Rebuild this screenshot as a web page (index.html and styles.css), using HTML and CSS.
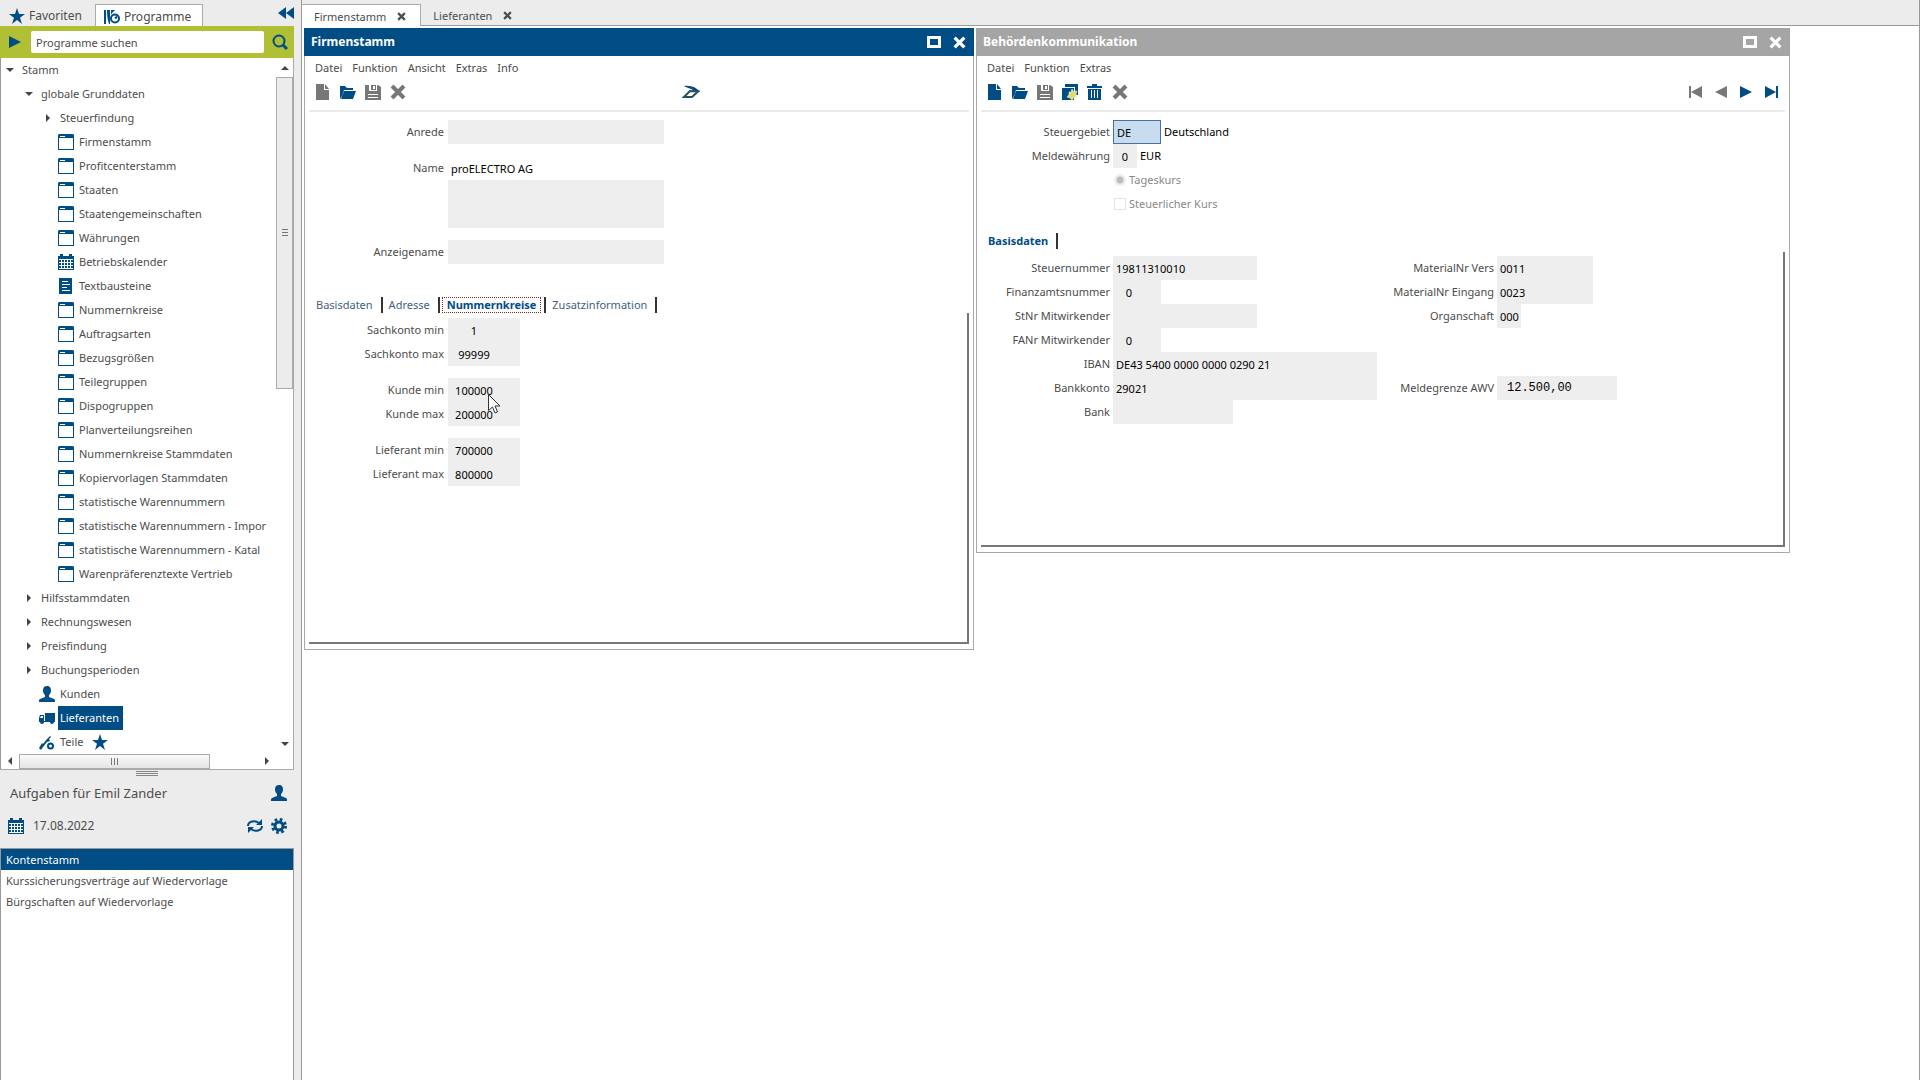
FILE: index.html
```html
<!DOCTYPE html>
<html lang="de">
<head>
<meta charset="utf-8">
<title>Firmenstamm</title>
<link rel="stylesheet" href="styles.css">
</head>
<body>
<svg class="sprite" aria-hidden="true">
  <symbol id="i-window" viewBox="0 0 16 16"><path fill="currentColor" d="M1 0h14l1 1v15H0V1zM1 4v11h14V4z"/><path stroke="#fff" d="M2 2.500h5"/></symbol>
  <symbol id="i-cal" viewBox="0 0 16 16"><path fill="currentColor" d="M0 2h2V0h3v2h6V0h3v2h2v14H0z"/><path stroke="#fff" fill="none" d="M1 5.500h14M1 8.500h14M1 11.500h14M1 14.500h14M3.500 6v9M6.500 6v9M9.500 6v9M12.500 6v9"/></symbol>
  <symbol id="i-text" viewBox="0 0 16 16"><path fill="currentColor" d="M1 0h13v16H1z"/><path stroke="#fff" d="M4 3.500h6M4 6.500h8M4 9.500h5M4 12.500h8"/></symbol>
  <symbol id="i-user" viewBox="0 0 16 16"><path fill="currentColor" d="M8 0c3 0 4 2 4 4.500C12 7 11 8 10 9v2l5 2c1 .5 1 1 1 3H0c0-2 0-2.500 1-3l5-2V9C5 8 4 7 4 4.500 4 2 5 0 8 0z"/></symbol>
  <symbol id="i-truck" viewBox="0 0 16 16"><path fill="currentColor" d="M6 3h10v8H6zM1 5h4v6h11v1h-1a2 2 0 0 1-4 0H5a2 2 0 0 1-4 0H0V8z"/><path fill="#fff" d="M2 6h2v2H1z"/></symbol>
  <symbol id="i-part" viewBox="0 0 16 16"><path fill="currentColor" d="M0 14l3-5 1 1 4-5 3-3 1 1-2 2 1 2-3 1-4 5-2 3z"/><circle cx="11.500" cy="12" r="2.500" fill="none" stroke="currentColor" stroke-width="2"/></symbol>
  <symbol id="i-star" viewBox="0 0 16 16"><path fill="currentColor" d="M8 0l2 6h6l-5 3.700L13 16l-5-4-5 4 2-6.300L0 6h6z"/></symbol>
  <symbol id="i-prog" viewBox="0 0 16 16"><path fill="currentColor" d="M0 1h2v14H0zM3 1h3v14H5C3.500 11 3 6 3 1zM7 1h4L8 4 7 6z"/><circle cx="11" cy="9.500" r="4" fill="none" stroke="currentColor" stroke-width="2"/><path stroke="currentColor" stroke-width="2" d="M11 9.500l2-2"/></symbol>
  <symbol id="i-back" viewBox="0 0 16 16"><path fill="currentColor" d="M8 2v12L0 8zM16 2v12L8 8z"/></symbol>
  <symbol id="i-play" viewBox="0 0 16 16"><path fill="currentColor" d="M2 2l12 6-12 6z"/></symbol>
  <symbol id="i-prev" viewBox="0 0 16 16"><path fill="currentColor" d="M14 2v12L2 8z"/></symbol>
  <symbol id="i-first" viewBox="0 0 16 16"><path fill="currentColor" d="M1 2h2v12H1zM14 2v12L3 8z"/></symbol>
  <symbol id="i-last" viewBox="0 0 16 16"><path fill="currentColor" d="M13 2h2v12h-2zM2 2v12l11-6z"/></symbol>
  <symbol id="i-search" viewBox="0 0 16 16"><circle cx="7" cy="7" r="5.500" fill="none" stroke="currentColor" stroke-width="2"/><path stroke="currentColor" stroke-width="3" d="M11 11l4 4"/></symbol>
  <symbol id="i-new" viewBox="0 0 16 16"><path fill="currentColor" d="M1 0h8v6h5v10H1zM10 0l4 5h-4z"/></symbol>
  <symbol id="i-open" viewBox="0 0 16 16"><path fill="currentColor" d="M0 2h5l2 2h6v2H4l-2 6-2 3zM4 7h12l-3 8H1z"/></symbol>
  <symbol id="i-save" viewBox="0 0 16 16"><path fill="currentColor" d="M0 1h4v6h8V1h1l3 2v13H0zM6 1h5v5H6z"/><path fill="#fff" d="M8 2h2v3H8z"/><path stroke="#fff" d="M3 10.500h10M3 13.500h10"/></symbol>
  <symbol id="i-x" viewBox="0 0 16 16"><path stroke="currentColor" stroke-width="4" d="M2 2l12 12M14 2L2 14"/></symbol>
  <symbol id="i-copy" viewBox="0 0 16 16"><path fill="currentColor" d="M3 0h13v11h-3V3H3zM0 4h12v12H0z"/><path fill="#e0dc6a" stroke="#fff" stroke-width=".5" d="M10 5l1.500 2.500L15 7l-1 3 1 3-3 .5-2 2.500-2-2-3-1 2-2.500L7 8l2 0z"/></symbol>
  <symbol id="i-trash" viewBox="0 0 16 16"><path fill="currentColor" d="M5 0h5v2h5v2H0V2h5zM1 5h13v11H1z"/><path stroke="#fff" d="M4.500 6v8M7.500 6v8M10.500 6v8"/></symbol>
  <symbol id="i-swift" viewBox="0 0 18 14"><path fill="#0b4a82" d="M2 1c7-1 12 1 16 6l-6-1C9 3 5 3 2 1z"/><path fill="none" stroke="#26505c" stroke-width="2" d="M2 12h8l6-5.500-8-.5z"/></symbol>
  <symbol id="i-max" viewBox="0 0 14 12"><path fill="none" stroke="currentColor" stroke-width="3" d="M1.500 1.500h11v9h-11z"/></symbol>
  <symbol id="i-sync" viewBox="0 0 16 16"><path fill="none" stroke="currentColor" stroke-width="2" d="M1 8c0-5 7-6 11-3M15 8c0 5-7 6-11 3"/><path fill="currentColor" d="M15 1v6H9zM1 15V9h6z"/></symbol>
  <symbol id="i-gear" viewBox="0 0 16 16"><circle cx="8" cy="8" r="4" fill="none" stroke="currentColor" stroke-width="3"/><circle cx="8" cy="8" r="6.500" fill="none" stroke="currentColor" stroke-width="3" stroke-dasharray="2.600 2.500"/></symbol>
  <symbol id="i-up" viewBox="0 0 8 8"><path fill="#444" d="M0 6l4-4 4 4z"/></symbol>
  <symbol id="i-down" viewBox="0 0 8 8"><path fill="#444" d="M0 2h8L4 6z"/></symbol>
  <symbol id="i-left" viewBox="0 0 8 8"><path fill="#444" d="M6 0v8L2 4z"/></symbol>
  <symbol id="i-right" viewBox="0 0 8 8"><path fill="#444" d="M2 0v8l4-4z"/></symbol>
</svg>

<div class="app">
  <aside class="side">
    <div class="side-tabs">
      <button class="side-tab"><svg class="ic"><use href="#i-star"/></svg>Favoriten</button>
      <button class="side-tab on"><svg class="ic"><use href="#i-prog"/></svg>Programme</button>
      <button class="collapse" aria-label="Einklappen"><svg class="ic"><use href="#i-back"/></svg></button>
    </div>
    <form class="search">
      <button type="button" aria-label="Starten"><svg class="ic"><use href="#i-play"/></svg></button>
      <input type="text" aria-label="Programme suchen" value="Programme suchen">
      <button type="button" aria-label="Suchen"><svg class="ic"><use href="#i-search"/></svg></button>
    </form>
    <div class="tree-box">
      <ul class="tree">
        <li class="l0"><svg class="tw"><use href="#i-down"/></svg>Stamm</li>
        <li class="l1"><svg class="tw"><use href="#i-down"/></svg>globale Grunddaten</li>
        <li class="l2"><svg class="tw"><use href="#i-right"/></svg>Steuerfindung</li>
        <li class="l3"><svg class="ic"><use href="#i-window"/></svg>Firmenstamm</li>
        <li class="l3"><svg class="ic"><use href="#i-window"/></svg>Profitcenterstamm</li>
        <li class="l3"><svg class="ic"><use href="#i-window"/></svg>Staaten</li>
        <li class="l3"><svg class="ic"><use href="#i-window"/></svg>Staatengemeinschaften</li>
        <li class="l3"><svg class="ic"><use href="#i-window"/></svg>Währungen</li>
        <li class="l3"><svg class="ic"><use href="#i-cal"/></svg>Betriebskalender</li>
        <li class="l3"><svg class="ic"><use href="#i-text"/></svg>Textbausteine</li>
        <li class="l3"><svg class="ic"><use href="#i-window"/></svg>Nummernkreise</li>
        <li class="l3"><svg class="ic"><use href="#i-window"/></svg>Auftragsarten</li>
        <li class="l3"><svg class="ic"><use href="#i-window"/></svg>Bezugsgrößen</li>
        <li class="l3"><svg class="ic"><use href="#i-window"/></svg>Teilegruppen</li>
        <li class="l3"><svg class="ic"><use href="#i-window"/></svg>Dispogruppen</li>
        <li class="l3"><svg class="ic"><use href="#i-window"/></svg>Planverteilungsreihen</li>
        <li class="l3"><svg class="ic"><use href="#i-window"/></svg>Nummernkreise Stammdaten</li>
        <li class="l3"><svg class="ic"><use href="#i-window"/></svg>Kopiervorlagen Stammdaten</li>
        <li class="l3"><svg class="ic"><use href="#i-window"/></svg>statistische Warennummern</li>
        <li class="l3"><svg class="ic"><use href="#i-window"/></svg>statistische Warennummern - Impor</li>
        <li class="l3"><svg class="ic"><use href="#i-window"/></svg>statistische Warennummern - Katal</li>
        <li class="l3"><svg class="ic"><use href="#i-window"/></svg>Warenpräferenztexte Vertrieb</li>
        <li class="l1"><svg class="tw"><use href="#i-right"/></svg>Hilfsstammdaten</li>
        <li class="l1"><svg class="tw"><use href="#i-right"/></svg>Rechnungswesen</li>
        <li class="l1"><svg class="tw"><use href="#i-right"/></svg>Preisfindung</li>
        <li class="l1"><svg class="tw"><use href="#i-right"/></svg>Buchungsperioden</li>
        <li class="l2i"><svg class="ic"><use href="#i-user"/></svg>Kunden</li>
        <li class="l2i"><svg class="ic"><use href="#i-truck"/></svg><span class="picked">Lieferanten</span></li>
        <li class="l2i"><svg class="ic"><use href="#i-part"/></svg>Teile<svg class="ic fav"><use href="#i-star"/></svg></li>
      </ul>
      <div class="vbar"><svg class="tw"><use href="#i-up"/></svg><div class="vthumb"><i></i></div><svg class="tw"><use href="#i-down"/></svg></div>
      <div class="hbar"><svg class="tw"><use href="#i-left"/></svg><div class="hthumb"><i></i></div><svg class="tw"><use href="#i-right"/></svg></div>
    </div>
    <div class="sash"><i></i></div>
    <div class="tasks-head">
      <div class="row big"><span class="grow">Aufgaben für Emil Zander</span><svg class="ic"><use href="#i-user"/></svg></div>
      <div class="row"><svg class="ic"><use href="#i-cal"/></svg><span class="grow date">17.08.2022</span><svg class="ic"><use href="#i-sync"/></svg><svg class="ic"><use href="#i-gear"/></svg></div>
    </div>
    <ul class="tasks">
      <li class="on">Kontenstamm</li>
      <li>Kurssicherungsverträge auf Wiedervorlage</li>
      <li>Bürgschaften auf Wiedervorlage</li>
    </ul>
  </aside>

  <main class="main">
    <div class="doc-tabs">
      <button class="doc-tab on">Firmenstamm<svg class="close"><use href="#i-x"/></svg></button>
      <button class="doc-tab">Lieferanten<svg class="close"><use href="#i-x"/></svg></button>
    </div>
    <div class="desk">
      <section class="win win-a">
        <header class="title"><h2>Firmenstamm</h2>
          <button aria-label="Maximieren"><svg class="max"><use href="#i-max"/></svg></button>
          <button aria-label="Schließen"><svg class="cls"><use href="#i-x"/></svg></button></header>
        <nav class="menu"><button>Datei</button><button>Funktion</button><button>Ansicht</button><button>Extras</button><button>Info</button></nav>
        <div class="tools">
          <button class="dim" aria-label="Neu"><svg class="ic"><use href="#i-new"/></svg></button>
          <button aria-label="Öffnen"><svg class="ic"><use href="#i-open"/></svg></button>
          <button class="dim" aria-label="Speichern"><svg class="ic"><use href="#i-save"/></svg></button>
          <button class="dim" aria-label="Abbrechen"><svg class="ic"><use href="#i-x"/></svg></button>
          <button class="swift" aria-label="Verknüpfung"><svg><use href="#i-swift"/></svg></button>
        </div>
        <div class="form head-a">
          <div class="f"><label for="anrede">Anrede</label><input id="anrede" class="w216" readonly></div>
          <div class="f gap"><label for="name">Name</label><input id="name" class="w216 plain" value="proELECTRO AG" readonly></div>
          <div class="f tall"><label for="name2"></label><textarea id="name2" class="w216" aria-label="Name Zusatz" readonly></textarea></div>
          <div class="f gap"><label for="anzeige">Anzeigename</label><input id="anzeige" class="w216" readonly></div>
        </div>
        <div class="tabs">
          <button>Basisdaten</button><button>Adresse</button><button class="on focus"><span>Nummernkreise</span></button><button>Zusatzinformation</button>
        </div>
        <div class="panel form">
          <div class="f"><label for="smin">Sachkonto min</label><input id="smin" class="w72 num" value="1" readonly></div>
          <div class="f"><label for="smax">Sachkonto max</label><input id="smax" class="w72 num" value="99999" readonly></div>
          <div class="f gap"><label for="kmin">Kunde min</label><input id="kmin" class="w72 num" value="100000" readonly></div>
          <div class="f"><label for="kmax">Kunde max</label><input id="kmax" class="w72 num" value="200000" readonly></div>
          <div class="f gap"><label for="lmin">Lieferant min</label><input id="lmin" class="w72 num" value="700000" readonly></div>
          <div class="f"><label for="lmax">Lieferant max</label><input id="lmax" class="w72 num" value="800000" readonly></div>
        </div>
      </section>

      <section class="win win-b">
        <header class="title off"><h2>Behördenkommunikation</h2>
          <button aria-label="Maximieren"><svg class="max"><use href="#i-max"/></svg></button>
          <button aria-label="Schließen"><svg class="cls"><use href="#i-x"/></svg></button></header>
        <nav class="menu"><button>Datei</button><button>Funktion</button><button>Extras</button></nav>
        <div class="tools">
          <button aria-label="Neu"><svg class="ic"><use href="#i-new"/></svg></button>
          <button aria-label="Öffnen"><svg class="ic"><use href="#i-open"/></svg></button>
          <button class="dim" aria-label="Speichern"><svg class="ic"><use href="#i-save"/></svg></button>
          <button aria-label="Kopieren"><svg class="ic"><use href="#i-copy"/></svg></button>
          <button aria-label="Löschen"><svg class="ic"><use href="#i-trash"/></svg></button>
          <button class="dim" aria-label="Abbrechen"><svg class="ic"><use href="#i-x"/></svg></button>
          <div class="pager">
            <button class="dim" aria-label="Erster"><svg class="ic"><use href="#i-first"/></svg></button>
            <button class="dim" aria-label="Voriger"><svg class="ic"><use href="#i-prev"/></svg></button>
            <button aria-label="Nächster"><svg class="ic"><use href="#i-play"/></svg></button>
            <button aria-label="Letzter"><svg class="ic"><use href="#i-last"/></svg></button>
          </div>
        </div>
        <div class="form head-b">
          <div class="f"><label for="gebiet">Steuergebiet</label><input id="gebiet" class="w48 active" value="DE"><span class="after">Deutschland</span></div>
          <div class="f"><label for="waehr">Meldewährung</label><input id="waehr" class="w24 one" value="0" readonly><span class="after">EUR</span></div>
          <div class="f opt"><input type="radio" id="tag" name="kurs" checked disabled><label for="tag">Tageskurs</label></div>
          <div class="f opt"><input type="radio" class="square" id="steuer" name="kurs" disabled><label for="steuer">Steuerlicher Kurs</label></div>
        </div>
        <div class="tabs"><button class="on">Basisdaten</button></div>
        <div class="panel cols">
          <div class="form">
            <div class="f"><label for="stnr">Steuernummer</label><input id="stnr" class="w144" value="19811310010" readonly></div>
            <div class="f"><label for="fanr">Finanzamtsnummer</label><input id="fanr" class="w48 num" value="0" readonly></div>
            <div class="f"><label for="stm">StNr Mitwirkender</label><input id="stm" class="w144" readonly></div>
            <div class="f"><label for="fam">FANr Mitwirkender</label><input id="fam" class="w48 num" value="0" readonly></div>
            <div class="f"><label for="iban">IBAN</label><input id="iban" class="w264" value="DE43 5400 0000 0000 0290 21" readonly></div>
            <div class="f"><label for="konto">Bankkonto</label><input id="konto" class="w264" value="29021" readonly></div>
            <div class="f"><label for="bank">Bank</label><input id="bank" class="w120" readonly></div>
          </div>
          <div class="form">
            <div class="f"><label for="mv">MaterialNr Vers</label><input id="mv" class="w96" value="0011" readonly></div>
            <div class="f"><label for="me">MaterialNr Eingang</label><input id="me" class="w96" value="0023" readonly></div>
            <div class="f"><label for="org">Organschaft</label><input id="org" class="w24" value="000" readonly></div>
            <div class="f push"><label for="awv">Meldegrenze AWV</label><input id="awv" class="w120 mono" value="12.500,00" readonly></div>
          </div>
        </div>
      </section>

      <svg class="cursor" viewBox="0 0 13 20"><path fill="#fff" stroke="#333" d="M.5.500v16l4-3.500 2.500 6 2.500-1-2.500-6h5z"/></svg>
    </div>
  </main>
</div>
</body>
</html>
```
FILE: styles.css
```css
* { box-sizing: border-box; }
body { margin: 0; font: 11px/16px "Noto Sans", "Open Sans", sans-serif; color: #4c4c4c; background: #fff; }
button { margin: 0; padding: 0; border: 0; background: none; font: inherit; color: inherit; display: flex; align-items: center; }
input, textarea { margin: 0; border: 0; border-radius: 0; font: inherit; resize: none; outline: 0; }
ul, h2 { margin: 0; padding: 0; list-style: none; }
svg { display: block; flex: none; }
.sprite { position: absolute; width: 0; height: 0; }
.ic { width: 16px; height: 16px; color: #004c85; }
.tw { width: 8px; height: 8px; }

.app { display: grid; grid-template-columns: 302px 1fr; height: 100vh; min-height: 960px; overflow: hidden; }
.side { display: flex; flex-direction: column; min-height: 0; background: #ececec; padding-right: 7px; border-right: 1px solid #9a9a9a; }
.side-tabs { display: flex; height: 26px; padding-left: 9px; }
.side-tab { gap: 4px; padding-right: 13px; padding-top: 6px; }
.side-tab.on { margin-top: 4px; padding: 2px 11px 0 8px; background: #fff; border: 1px solid #aaa; border-bottom: 0; }
.collapse { margin-left: auto; }
.side-tab { font-size: 12px; }
.search { display: flex; align-items: center; gap: 8px; height: 32px; padding: 0 6px 0 7px; background: #b1bf35; }
.search input { flex: 1; min-width: 0; height: 22px; padding: 0 5px; border-radius: 2px; background: #fff; color: #4c4c4c; }

.tree-box { display: grid; grid-template: 695px 16px / 1fr 17px; background: #fff; border-left: 1px solid #999; border-right: 1px solid #aaa; }
.tree { overflow: hidden; white-space: nowrap; }
.tree li { display: flex; align-items: center; gap: 5px; height: 24px; }
.l0 { padding-left: 5px; }
.tree .l0, .tree .l1, .tree .l2 { gap: 8px; }
.l1 { padding-left: 24px; }
.l2 { padding-left: 43px; }
.l3 { padding-left: 57px; }
.l2i { padding-left: 38px; }
.picked { background: #004c85; color: #fff; line-height: 24px; margin-left: -2px; padding: 0 4px 0 2px; }
.fav { margin-left: 4px; }
.vbar { display: flex; flex-direction: column; align-items: center; }
.vbar .tw { margin: 6px 0 5px; }
.vthumb { flex: 0 1 312px; width: 100%; border: 1px solid #aaa; background: #ececec; display: flex; align-items: center; justify-content: center; margin-bottom: auto; }
.vthumb i { width: 6px; height: 8px; background: repeating-linear-gradient(#777 0 1px, transparent 1px 3px); }
.hbar { display: flex; align-items: center; grid-column: 1 / 3; padding: 0 22px 0 5px; gap: 5px; }
.hthumb { width: 191px; height: 15px; border: 1px solid #aaa; background: linear-gradient(#fafafa, #e4e4e4); display: flex; align-items: center; justify-content: center; }
.hthumb i { width: 8px; height: 7px; background: repeating-linear-gradient(90deg, #777 0 1px, transparent 1px 3px); }
.hbar .tw:last-child { margin-left: auto; }
.sash { height: 7px; border-top: 1px solid #aaa; display: flex; justify-content: center; align-items: center; }
.sash i { width: 22px; height: 5px; background: repeating-linear-gradient(#888 0 1px, transparent 1px 2px); }
.tasks-head { height: 72px; padding: 0 7px 0 8px; font-size: 12px; }
.row { display: flex; align-items: center; gap: 8px; height: 33px; }
.big { font-size: 13px; padding-left: 2px; }
.grow { flex: 1; }
.date { padding-left: 1px; }
.tasks { flex: 1; background: #fff; border: 1px solid #999; border-bottom: 0; }
.tasks li { height: 21px; line-height: 21px; padding-left: 5px; }
.tasks .on { background: #004c85; color: #fff; }

.main { display: flex; flex-direction: column; min-width: 0; border-right: 1px solid #999; }
.doc-tabs { display: flex; height: 26px; background: #ececec; border-bottom: 1px solid #999; }
.doc-tab { gap: 11px; padding: 6px 14px 0 12px; }
.doc-tab.on { background: #fff; margin: 4px 0 -1px; padding: 2px 14px 0 12px; border: 1px solid #aaa; border-width: 1px 1px 0 0; }
.close { width: 9px; height: 9px; }
.desk { position: relative; flex: 1; }

.win { position: absolute; top: 2px; display: flex; flex-direction: column; background: #fff; border: 1px solid #aaa; border-top: 0; padding-bottom: 5px; }
.win-a { left: 2px; width: 670px; height: 622px; }
.win-b { left: 674px; width: 814px; height: 525px; }
.title { display: flex; align-items: center; gap: 12px; height: 28px; margin: 0 -1px; padding: 0 8px 0 7px; background: #004c85; color: #fff; }
.title.off { background: #a5a5a5; }
.title h2 { flex: 1; font-size: 12px; line-height: 16px; }
.max { width: 14px; height: 12px; }
.cls { width: 13px; height: 13px; }
.menu { display: flex; gap: 10px; height: 24px; padding-left: 10px; }
.tools { display: flex; align-items: center; gap: 9px; height: 32px; margin: 0 4px; padding: 0 6px 6px; border-bottom: 2px solid #ebebeb; }
.tools .dim .ic { color: #777; }
.swift { margin-left: 267px; }
.swift svg { width: 18px; height: 14px; }
.pager { display: flex; gap: 9px; margin-left: auto; }

.f { display: flex; align-items: center; gap: 4px; height: 24px; }
.f label { width: 136px; text-align: right; white-space: nowrap; }
.f input, .f textarea { height: 24px; padding: 0 0 0 3px; background: #eee; color: #000; font: 11px/16px "Noto Sans", "Open Sans", sans-serif; }
.win-b .f { gap: 3px; }
.win-b .f label { width: 130px; }
.win .gap { margin-top: 12px; }
.win .tall, .f textarea { height: 48px; }
.w24 { width: 24px; } .w48 { width: 48px; } .w72 { width: 72px; } .w96 { width: 96px; }
.w120 { width: 120px; } .w144 { width: 144px; } .w216 { width: 216px; } .w264 { width: 264px; }
.f .plain { background: #fff; }
.f .num { text-align: center; padding: 0 20px 0 0; }
.f .w48.num { padding-right: 16px; }
.f .one { text-align: center; padding: 0; }
.f .mono { font: 12px/16px "Liberation Mono", monospace; padding-left: 10px; }
.f .active { background: #c8dcf0; border: 1px solid #4a6fa5; }
.after { color: #000; }
.head-a { padding: 8px 3px 0; height: 185px; }
.head-b { padding: 8px 3px 0; height: 121px; }
.f.opt { padding-left: 134px; color: #888; }
.win-b .f.opt label { width: auto; }
.f.opt input { appearance: none; width: 12px; height: 12px; padding: 0; background: radial-gradient(#bbb 0 3px, #eee 4px); border-radius: 6px; }
.f.opt .square { background: #fff; border: 1px solid #e4e4e4; border-radius: 0; }

.tabs { display: flex; align-items: center; height: 16px; padding-left: 5px; color: #3f6180; }
.win-b .tabs { margin-bottom: 3px; }
.tabs button { height: 16px; padding: 0 8px 0 6px; border-right: 2px solid #333; }
.tabs .on { color: #004c85; font-weight: 700; }
.tabs .focus { padding: 0 3px 0 2px; }
.focus span { padding: 0 4px; line-height: 14px; border: 1px dotted #7a2a20; }
.panel { flex: 1; margin: 0 4px 0 4px; padding-top: 5px; border: solid #777; border-width: 0 2px 2px 0; }
.win-a .panel .f label { width: 135px; }
.win-b .cols { display: flex; padding-top: 4px; }
.win-b .cols label { width: 129px; }
.cols .form + .form .f label { width: 117px; }
.win .push { margin-top: 48px; }
.cursor { position: absolute; left: 186px; top: 368px; width: 13px; height: 20px; }
```
